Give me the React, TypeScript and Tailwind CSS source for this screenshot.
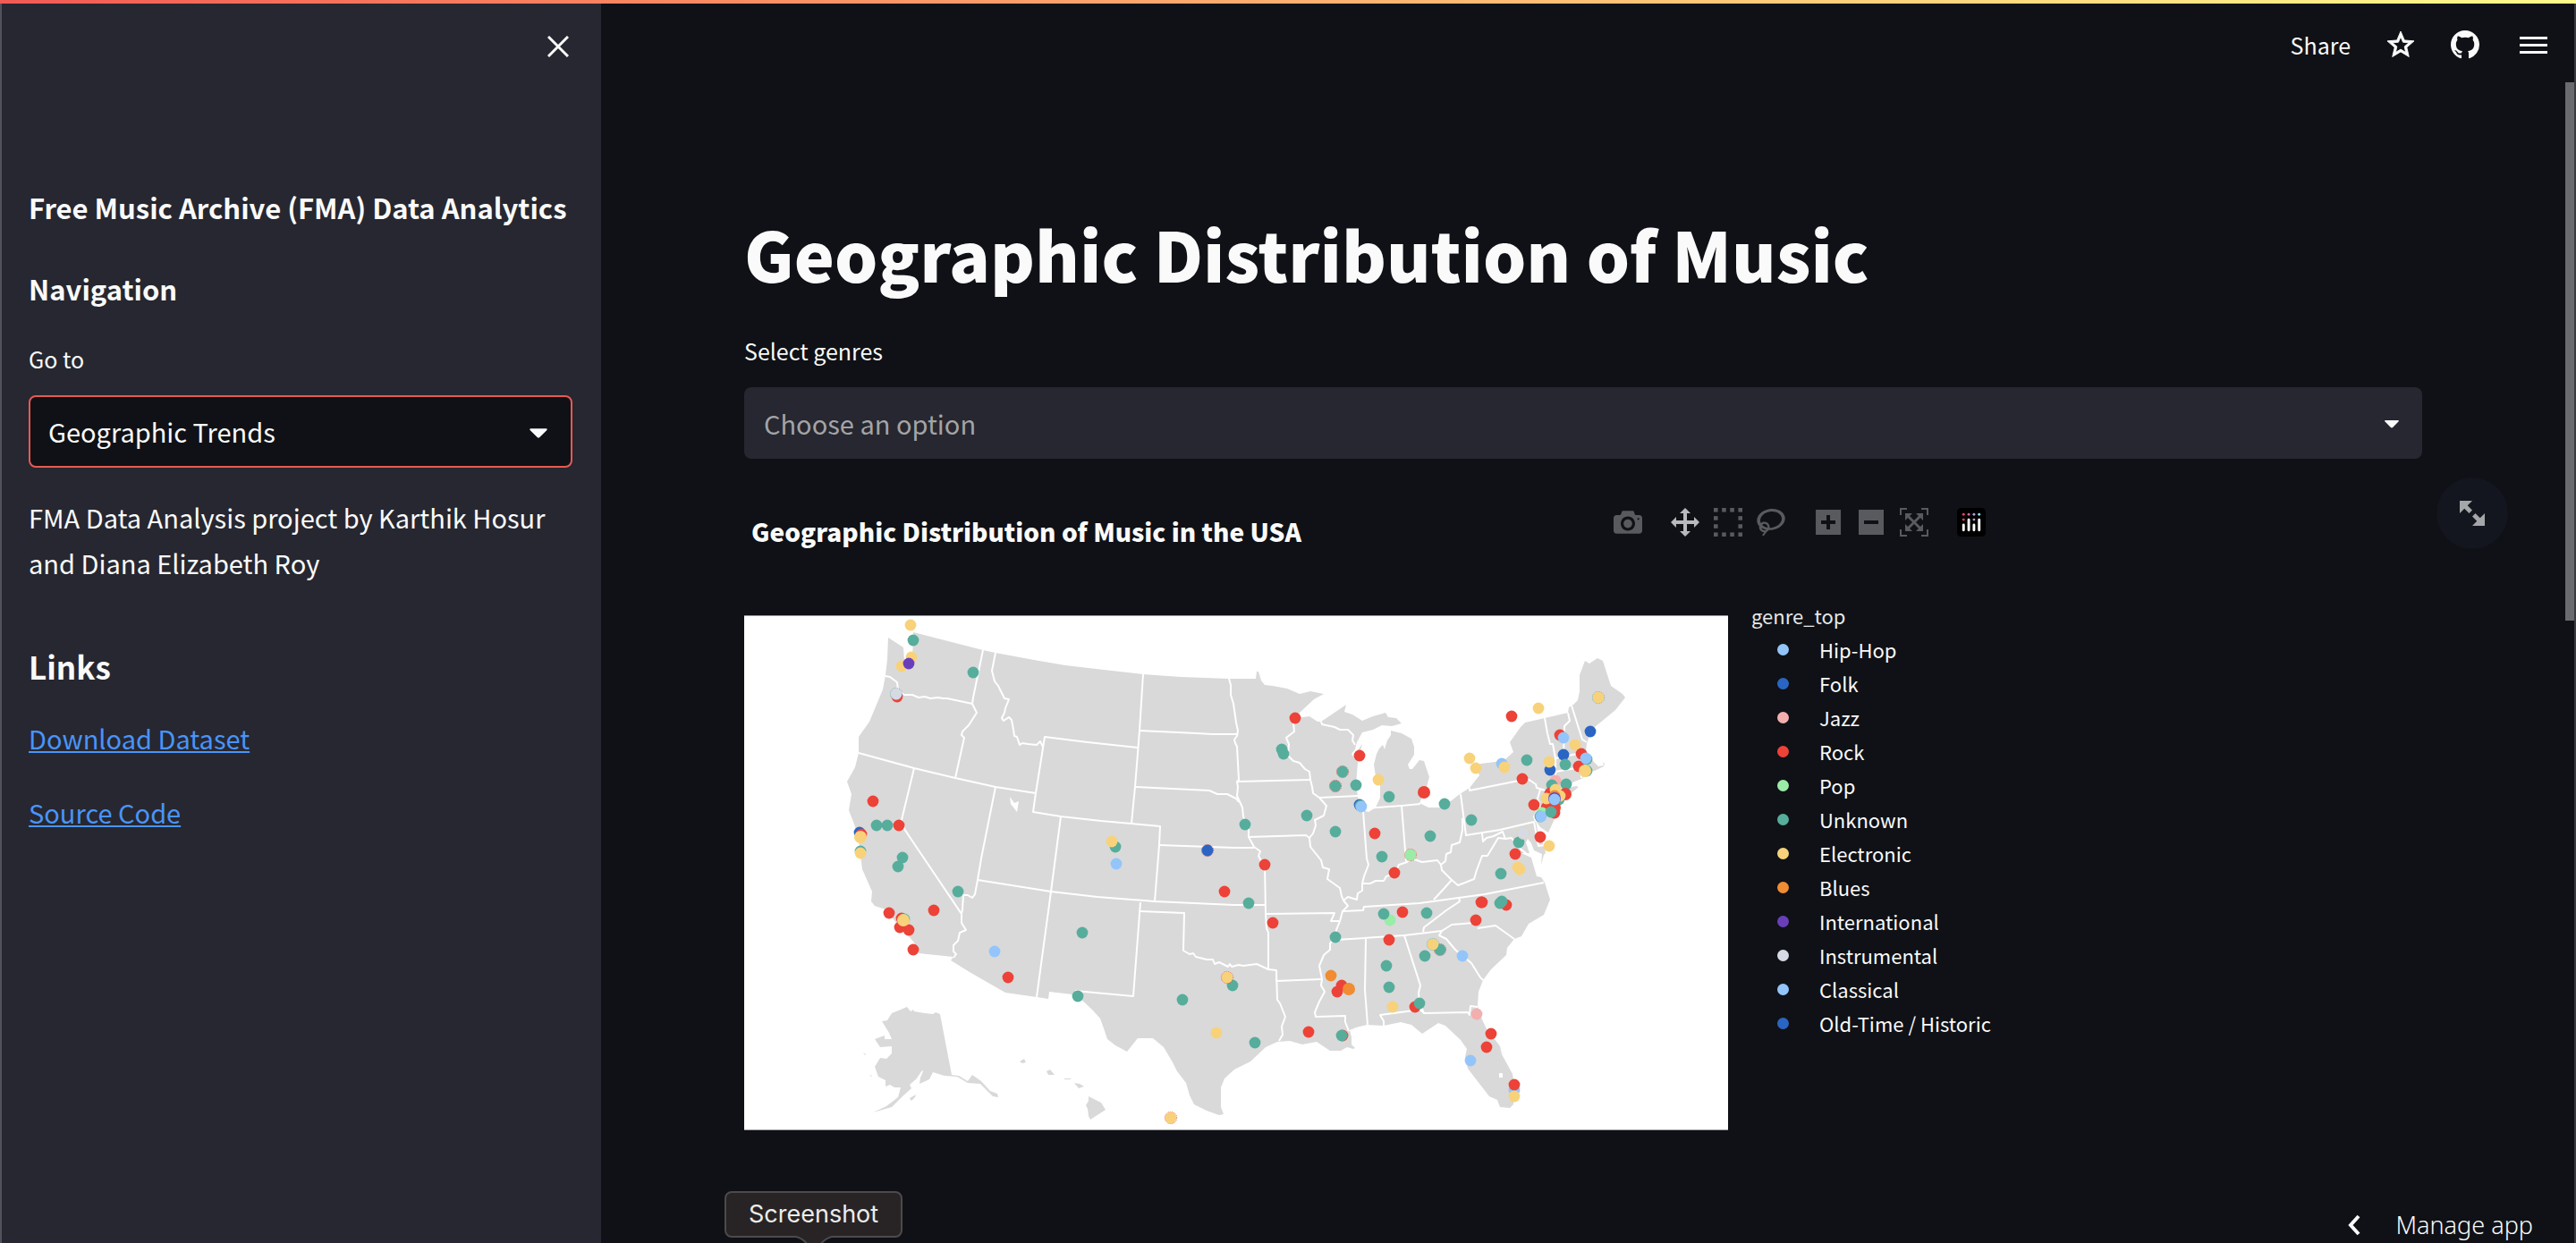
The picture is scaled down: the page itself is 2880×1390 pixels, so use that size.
import type { ReactNode } from "react";

const SANS = "font-['Noto_Sans_CJK_JP','Noto_Sans',sans-serif]";

const PALETTE = {
  sky: "#93c5fa",
  blue: "#2a65c3",
  pink: "#f3afae",
  red: "#ed4238",
  green: "#9aeca6",
  teal: "#57ad9c",
  yellow: "#f8d27a",
  orange: "#f08c33",
  purple: "#693fb9",
  silver: "#d5dae5",
};

type Tone = keyof typeof PALETTE;

const LEGEND: { name: string; tone: Tone }[] = [
  { name: "Hip-Hop", tone: "sky" },
  { name: "Folk", tone: "blue" },
  { name: "Jazz", tone: "pink" },
  { name: "Rock", tone: "red" },
  { name: "Pop", tone: "green" },
  { name: "Unknown", tone: "teal" },
  { name: "Electronic", tone: "yellow" },
  { name: "Blues", tone: "orange" },
  { name: "International", tone: "purple" },
  { name: "Instrumental", tone: "silver" },
  { name: "Classical", tone: "sky" },
  { name: "Old-Time / Historic", tone: "blue" },
];

const MAINLAND =
  "161,25 178,36 179,50 188,52 189,19 267,39 281,42 324,50 359,56 402,61 446,66 488,69 542,71 572,71 573,63 575,63 578,73 582,78 591,79 607,82 621,88 633,85 648,88 637,94 621,109 618,115 632,113 641,119 645,119 673,100 671,108 680,111 691,118 703,113 717,109 720,114 729,115 735,121 724,124 713,123 703,128 691,131 685,142 683,150 679,155 681,158 691,144 687,159 686,165 684,190 686,202 687,210 694,219 698,220 706,215 711,204 711,190 706,180 704,167 707,155 710,149 714,145 716,150 719,140 723,134 723,129 735,132 746,138 749,147 749,156 742,167 744,172 747,172 755,162 760,163 766,181 763,192 755,210 765,215 777,215 791,207 800,200 811,193 822,179 818,171 823,166 840,164 850,162 860,153 856,142 868,125 873,120 895,115 921,109 922,103 927,100 932,95 934,85 934,67 940,51 945,54 954,48 960,51 969,79 982,88 985,92 974,106 951,125 945,135 942,144 941,152 950,164 955,169 961,168 960,164 962,166 961,169 951,174 945,175 936,183 921,189 908,196 930,191 933,192 921,202 908,210 909,222 905,230 899,243 890,237 885,230 888,245 895,259 896,266 894,268 891,279 892,267 883,263 880,255 876,250 874,254 878,266 869,266 880,271 886,292 891,293 895,299 901,318 894,335 877,345 869,359 861,362 853,372 852,380 835,396 826,408 821,421 820,437 825,452 831,465 839,474 845,482 847,491 859,513 861,525 860,547 856,551 845,550 842,542 833,538 809,507 806,494 808,485 801,475 784,459 776,456 758,468 746,458 734,455 715,459 696,458 684,461 677,464 679,472 679,480 683,484 681,485 674,483 667,487 655,487 640,477 624,480 610,476 596,477 583,483 566,499 548,508 537,518 533,528 533,550 536,558 531,559 517,554 503,547 498,537 494,523 484,510 479,500 469,483 457,473 440,473 428,488 415,481 406,474 402,462 398,451 390,442 372,425 367,424 341,421 340,429 327,427 292,422 252,399 231,386 234,382 195,378 190,366 184,359 170,344 158,329 146,325 142,320 143,309 132,284 129,259 127,245 122,231 117,218 120,200 115,186 124,170 128,154 128,136 140,119 145,107 155,83 158,67 160,49";

const ALASKA =
  "182,438 186,443 189,441 190,443 202,445 211,446 214,444 219,446 232,514 240,515 250,521 255,514 265,521 275,532 283,535 284,539 278,538 264,524 250,523 238,516 224,515 211,511 207,519 196,524 197,517 200,510 199,509 192,519 185,525 187,529 177,538 165,550 144,556 159,549 172,539 175,528 168,528 163,525 158,527 158,520 150,516 146,505 152,495 159,496 165,490 165,482 152,483 146,474 157,470 157,474 165,474 162,467 154,454 160,453 165,445 175,441";

const ISLANDS = [
  "185,540 192,536 191,539 187,543",
  "133,489 136,491 135,492",
  "140,514 143,515 142,516",
  "308,499 313,496 315,500 311,501",
  "338,510 342,508 347,514 340,514",
  "358,518 365,518 365,519 358,519",
  "369,523 375,524 380,527 374,529",
  "385,538 399,545 404,553 387,564 385,560 384,552 382,548 385,543",
];

const LAKES = ["297,203 302,210 307,208 305,220 298,211", "844,512 848,512 848,517 844,517"];

const BORDERS = [
  "158,68 163,69 171,75 172,84 179,89 188,89 195,92 202,91 208,93 217,92 222,93 227,93 255,99",
  "267,39 256,92 255,99 260,109 251,123 244,130 243,134 246,137 236,182",
  "128,154 190,171 236,182 281,192 326,199",
  "190,171 176,229 179,239 243,334",
  "281,192 265,272 261,296 258,312 255,316 250,313 245,313 244,329 243,334 243,344 248,352 241,355 239,364 234,369 234,376 237,379 234,383",
  "261,296 343,309 395,315 459,320 548,324 583,324",
  "281,42 277,62 280,74 284,79 291,93 296,94 292,104 291,109 288,115 290,118 296,114 299,117 301,128 302,135 305,136 308,145 311,143 317,144 327,145 331,141 334,147",
  "440,148 384,142 336,136 326,199 323,220 354,225 399,230 433,233 465,236 464,257 459,320",
  "446,66 442,129 437,192 433,233",
  "442,129 506,132 524,133 551,133",
  "437,192 520,196 529,200 540,200 550,205 553,209",
  "464,257 548,260 570,260",
  "354,225 343,309 327,427",
  "443,321 435,426 370,420",
  "443,331 492,333 491,375 498,379 502,378 505,382 517,385 524,385 526,390 531,388 541,393 543,390 545,393 553,391 558,392 573,390 586,396 595,397 596,430 599,434 605,449 601,460 602,469 598,476",
  "542,71 544,78 544,89 547,99 550,120 552,129 551,135 548,139 549,143 551,147 553,184 551,186 552,192 551,202 557,215 558,225 564,240 564,248 570,259 577,264 575,269 578,275 582,279 583,334 584,350 586,355 586,396",
  "551,186 633,184",
  "614,120 615,130 606,137 609,144 608,157 614,163 621,165 627,172 632,175 633,184 635,192 636,199 643,204 651,213 648,224 638,229 639,235 636,244 632,249 633,259 645,274 647,282 654,284 652,295 666,305 668,314 670,319 675,325 669,331 666,342 662,352 661,360 655,367 655,374 648,380 643,392 646,407 645,414 649,421 643,432 638,444 639,449 672,448 672,455 676,465",
  "564,248 628,246 632,249",
  "643,204 686,202",
  "645,119 646,122 660,125 666,128 675,128 681,134 680,140 683,145",
  "692,219 696,272 698,279 693,292 691,300",
  "694,216 735,213 756,211",
  "735,213 740,275",
  "670,319 675,315 685,318 686,311 691,308 691,300 700,300 706,297 715,297 718,292 727,289 732,279 741,276 746,272 758,276 775,274 779,279 784,275 785,267 790,265 791,257 800,254 803,240 803,227",
  "801,200 807,246 845,240 883,231",
  "811,193 811,196 876,183 885,189 886,193 893,195 890,195 887,205 890,214 883,225 885,231",
  "893,195 905,200",
  "883,231 888,258 895,257",
  "779,279 780,285 791,296 783,305 771,318",
  "791,296 798,302 806,299 816,295 819,285 825,269 831,269 843,249 851,250 848,242 838,247 830,249 826,253 825,244",
  "851,250 858,249 865,259 875,267",
  "669,331 692,330 693,326 755,322 828,312 894,299",
  "583,334 660,333 656,342 665,342",
  "662,363 738,358 780,353 791,346 816,344",
  "820,350 840,347 861,362",
  "595,397 595,409 645,407",
  "695,362 694,419 697,458",
  "738,358 756,414 754,422 755,434 760,445",
  "715,459 715,454 711,447 756,441 760,445 809,444 811,447 812,437 820,438",
  "759,354 760,349 768,343 785,330 800,320 799,315",
  "780,353 777,358 785,362 795,374 813,389 823,405 826,408",
  "895,115 898,132 901,144 904,144 907,160 907,175 908,189",
  "921,109 923,118 917,124 916,159",
  "925,101 937,139 942,142",
  "907,160 931,155 938,152",
  "907,175 935,170 936,182",
];

const POINTS: [Tone, number, number, number?][] = [
  ["yellow", 186, 11], ["teal", 189, 28], ["yellow", 187, 47], ["yellow", 176, 57], ["purple", 184, 54],
  ["teal", 256, 64], ["red", 171, 91], ["silver", 170, 88], ["red", 144, 208], ["teal", 148, 235],
  ["teal", 160, 235], ["red", 173, 235], ["blue", 129, 243], ["red", 131, 245], ["yellow", 130, 248, 7],
  ["teal", 130, 264], ["yellow", 130, 266], ["teal", 177, 271], ["teal", 172, 281], ["teal", 415, 259],
  ["yellow", 411, 253], ["sky", 416, 278], ["blue", 518, 263], ["teal", 239, 309], ["red", 162, 333],
  ["red", 176, 339], ["red", 174, 349], ["red", 184, 352], ["teal", 179, 340], ["yellow", 178, 341, 7], ["red", 212, 330],
  ["red", 189, 374], ["sky", 280, 376], ["red", 295, 405], ["teal", 378, 355], ["teal", 373, 426],
  ["teal", 490, 430], ["yellow", 528, 467], ["yellow", 477, 562], ["red", 537, 309], ["red", 616, 115],
  ["teal", 601, 150], ["teal", 603, 155], ["red", 688, 157], ["teal", 669, 175], ["teal", 661, 191],
  ["teal", 684, 190], ["blue", 688, 212], ["teal", 689, 213], ["sky", 690, 214], ["yellow", 709, 184], ["teal", 721, 203],
  ["red", 760, 198, 7], ["teal", 783, 211], ["teal", 629, 224], ["teal", 560, 234], ["teal", 661, 242],
  ["red", 705, 244], ["teal", 713, 270], ["teal", 767, 247], ["green", 745, 268], ["red", 727, 288],
  ["red", 582, 279], ["teal", 813, 229], ["yellow", 811, 160], ["yellow", 818, 171], ["teal", 564, 322],
  ["red", 591, 344], ["teal", 661, 360], ["green", 722, 341], ["teal", 715, 334], ["red", 736, 332],
  ["teal", 763, 333], ["red", 721, 363], ["teal", 718, 392], ["teal", 721, 416], ["yellow", 725, 438],
  ["red", 750, 438], ["teal", 755, 434], ["teal", 761, 381], ["teal", 778, 374], ["yellow", 770, 368],
  ["sky", 803, 381], ["orange", 656, 403], ["red", 668, 414], ["red", 663, 421], ["orange", 676, 418, 7],
  ["teal", 546, 414], ["yellow", 540, 405], ["red", 631, 466], ["red", 669, 470], ["teal", 668, 470],
  ["teal", 571, 478], ["pink", 819, 446], ["sky", 812, 498], ["red", 824, 321], ["red", 818, 341],
  ["red", 858, 113], ["yellow", 888, 104], ["yellow", 955, 92], ["blue", 946, 130], ["red", 912, 134],
  ["sky", 916, 137], ["yellow", 929, 145], ["red", 936, 155], ["blue", 916, 156], ["teal", 918, 167],
  ["red", 933, 169], ["teal", 942, 161], ["sky", 941, 160], ["teal", 942, 174], ["yellow", 940, 174, 7],
  ["sky", 847, 166], ["yellow", 850, 170], ["teal", 875, 162], ["blue", 901, 173], ["yellow", 900, 164],
  ["red", 870, 183], ["pink", 907, 185], ["teal", 903, 190], ["teal", 919, 189], ["red", 901, 199],
  ["red", 918, 200, 7], ["yellow", 907, 195], ["teal", 911, 206], ["yellow", 912, 202], ["red", 897, 215],
  ["red", 906, 215, 7], ["red", 906, 221], ["yellow", 897, 205], ["orange", 906, 202], ["purple", 906, 205, 7],
  ["sky", 906, 206], ["green", 892, 221], ["teal", 890, 225], ["sky", 891, 225], ["teal", 902, 220],
  ["red", 883, 212], ["red", 890, 248], ["yellow", 900, 258], ["teal", 866, 254], ["silver", 871, 244],
  ["red", 862, 267], ["yellow", 865, 282], ["yellow", 867, 284], ["teal", 846, 289], ["red", 825, 321],
  ["red", 852, 324], ["teal", 847, 320], ["teal", 845, 322], ["red", 835, 468], ["red", 830, 483],
  ["sky", 861, 531], ["red", 861, 525], ["yellow", 861, 538],
];

// Markers under which a differently coloured ring shows.
const RINGS: [Tone, number, number][] = [
  ["red", 669, 175], ["red", 661, 191], ["red", 778, 374], ["teal", 955, 92], ["red", 540, 405],
  ["teal", 170, 88], ["yellow", 871, 244], ["red", 745, 268], ["teal", 770, 368], ["red", 477, 562], ["red", 518, 263],
];

function UsaMap() {
  return (
    <svg viewBox="0 0 1100 576" className="block w-full" role="img" aria-label="Map of music locations in the USA">
      <rect width="1100" height="576" fill="#fff" />
      <g fill="#d9d9d9">
        <polygon points={MAINLAND} />
        <polygon points={ALASKA} />
        {ISLANDS.map((p) => (
          <polygon key={p} points={p} />
        ))}
      </g>
      {LAKES.map((p) => (
        <polygon key={p} points={p} fill="#fff" />
      ))}
      <g fill="none" stroke="#fff" strokeWidth="2" strokeLinejoin="round">
        {BORDERS.map((p) => (
          <polyline key={p} points={p} />
        ))}
      </g>
      {POINTS.map(([tone, x, y, r], i) => {
        const ring = RINGS.find(([, rx, ry]) => rx === x && ry === y);
        return (
          <g key={i}>
            {ring && <circle cx={x} cy={y} r={6.6} fill="none" stroke={PALETTE[ring[0]]} strokeDasharray="1 1" />}
            <circle cx={x} cy={y} r={r ?? 6.4} fill={PALETTE[tone]} />
          </g>
        );
      })}
      <path d="M0 .5H1100M0 575.5H1100" stroke="#9b9da1" />
    </svg>
  );
}

function Caret({ size }: { size: string }) {
  return (
    <svg viewBox="0 0 24 24" className={`pointer-events-none shrink-0 fill-[#fafafa] ${size}`} aria-hidden="true">
      <path d="M12.7071 15.2929L17.1464 10.8536C17.4614 10.5386 17.2383 10 16.7929 10L7.20711 10C6.76165 10 6.53857 10.5386 6.85355 10.8536L11.2929 15.2929C11.6834 15.6834 12.3166 15.6834 12.7071 15.2929Z" />
    </svg>
  );
}

function ModeButton({ label, active, children, width = 1000 }: { label: string; active?: boolean; children: ReactNode; width?: number }) {
  return (
    <button type="button" aria-label={label} className="flex w-12 justify-center">
      <svg
        viewBox={`0 0 ${width} 1000`}
        className={active ? "h-8 w-8 fill-[#b9babb]" : "h-8 w-8 fill-[#595a5e]"}
        aria-hidden="true"
      >
        <g transform="matrix(1 0 0 -1 0 850)">{children}</g>
      </svg>
    </button>
  );
}

function ModeBar() {
  const squares: [number, number][] = [];
  [0, 286, 571, 857].forEach((x, i) =>
    [707, 421, 136, -150].forEach((y, j) => {
      if (i === 0 || i === 3 || j === 0 || j === 3) squares.push([x, y]);
    }),
  );
  return (
    <div className="flex h-16 items-center gap-4" role="toolbar" aria-label="Chart tools">
      <ModeButton label="Download plot as a png">
        <path d="m500 450c-83 0-150-67-150-150 0-83 67-150 150-150 83 0 150 67 150 150 0 83-67 150-150 150z m400 150h-120c-16 0-34 13-39 29l-31 93c-6 15-23 28-40 28h-340c-16 0-34-13-39-28l-31-94c-6-15-23-28-40-28h-120c-55 0-100-45-100-100v-450c0-55 45-100 100-100h800c55 0 100 45 100 100v450c0 55-45 100-100 100z m-400-550c-138 0-250 112-250 250 0 138 112 250 250 250 138 0 250-112 250-250 0-138-112-250-250-250z m365 380c-19 0-35 16-35 35 0 19 16 35 35 35 19 0 35-16 35-35 0-19-16-35-35-35z" />
      </ModeButton>
      <div className="flex">
        <ModeButton label="Pan" active>
          <path d="m1000 350l-187 188 0-125-250 0 0 250 125 0-188 187-187-187 125 0 0-250-250 0 0 125-188-188 186-187 0 125 252 0 0-250-125 0 187-188 188 188-125 0 0 250 250 0 0-126 187 188z" />
        </ModeButton>
        <ModeButton label="Box Select">
          {squares.map(([x, y]) => (
            <rect key={`${x}-${y}`} x={x} y={y} width="143" height="143" />
          ))}
        </ModeButton>
        <ModeButton label="Lasso Select" width={1031}>
          <path d="m1018 538c-36 207-290 336-568 286-277-48-473-256-436-463 10-57 36-108 76-151-13-66 11-137 68-183 34-28 75-41 114-42l-55-70 0 0c-2-1-3-2-4-3-10-14-8-34 5-45 14-11 34-8 45 4 1 1 2 3 2 5l0 0 113 140c16 11 31 24 45 40 4 3 6 7 8 11 48-3 100 0 151 9 278 48 473 255 436 462z m-624-379c-80 14-149 48-197 96 42 42 109 47 156 9 33-26 47-66 41-105z m-187-74c-19 16-33 37-39 60 50-32 109-55 174-68-42-25-95-24-135 8z m360 75c-34-7-69-9-102-8 8 62-16 128-68 170-73 59-175 54-244-5-9 20-16 40-20 61-28 159 121 317 333 354s407-60 434-217c28-159-121-318-333-355z" />
        </ModeButton>
      </div>
      <div className="flex">
        <ModeButton label="Zoom in" width={875}>
          <path d="m1 787l0-875 875 0 0 875-875 0z m687-500l-187 0 0-187-125 0 0 187-188 0 0 125 188 0 0 187 125 0 0-187 187 0 0-125z" />
        </ModeButton>
        <ModeButton label="Zoom out" width={875}>
          <path d="m0 788l0-876 875 0 0 876-875 0z m688-500l-500 0 0 125 500 0 0-125z" />
        </ModeButton>
        <ModeButton label="Reset">
          <path d="m250 850l-187 0-63 0 0-62 0-188 63 0 0 188 187 0 0 62z m688 0l-188 0 0-62 188 0 0-188 62 0 0 188 0 62-62 0z m-875-938l0 188-63 0 0-188 0-62 63 0 187 0 0 62-187 0z m875 188l0-188-188 0 0-62 188 0 62 0 0 62 0 188-62 0z m-125 188l-1 0-93-94-156 156 156 156 92-93 2 0 0 250-250 0 0-2 93-92-156-156-156 156 94 92 0 2-250 0 0-250 0 0 93 93 157-156-157-156-93 94 0 0 0-250 250 0 0 0-94 93 156 157 156-157-93-93 0 0 250 0 0 250z" />
        </ModeButton>
      </div>
      <a href="#plotly" aria-label="Produced with Plotly" className="flex w-12 justify-center">
        <svg viewBox="0 0 132 132" className="size-8" aria-hidden="true">
          <rect width="132" height="132" rx="18" fill="#000" />
          <g fill="#ef3f6b">
            <circle cx="30" cy="30" r="6" />
            <circle cx="30" cy="54" r="6" />
          </g>
          <circle cx="54" cy="30" r="6" fill="#d0679b" />
          <circle cx="78" cy="30" r="6" fill="#b7a0cf" />
          <circle cx="78" cy="54" r="6" fill="#b7a0cf" />
          <circle cx="102" cy="30" r="6" fill="#8fe0f5" />
          <path d="M30 78v24M54 54v48M78 78v24M102 54v48" stroke="#fff" strokeWidth="12" strokeLinecap="round" />
        </svg>
      </a>
    </div>
  );
}

function Sidebar() {
  return (
    <aside className="relative w-[672px] shrink-0 border-l-2 border-[#515259] bg-[#262730] pr-8 pl-[30px] text-[#fafafa]">
      <div className="flex h-24 justify-end pr-1">
        <button type="button" aria-label="Close sidebar" className="flex w-6 items-center justify-center">
          <svg viewBox="0 0 24 24" className="size-6" aria-hidden="true">
            <path d="M1 1L23 23M23 1L1 23" stroke="#fafafa" strokeWidth="3" />
          </svg>
        </button>
      </div>
      <h2 className="mt-[108px] text-[31px] leading-[48px] font-bold whitespace-nowrap">Free Music Archive (FMA) Data Analytics</h2>
      <h2 className="mt-[43px] text-[31px] leading-[48px] font-bold">Navigation</h2>
      <label htmlFor="page" className="mt-[34px] block text-[25px] leading-10">
        Go to
      </label>
      <div className="mt-[21px] flex h-[81px] items-center rounded-lg border-2 border-[#e85a50] bg-[#0f1116]">
        <select
          id="page"
          className="h-full flex-1 appearance-none bg-transparent pl-5 text-[29px] outline-none"
          defaultValue="Geographic Trends"
        >
          <option>Geographic Trends</option>
        </select>
        <div className="pointer-events-none -ml-16 flex w-[58px] justify-start">
          <Caret size="size-11" />
        </div>
      </div>
      <p className="mt-[30px] text-[29px] leading-[51px]">FMA Data Analysis project by Karthik Hosur and Diana Elizabeth Roy</p>
      <h2 className="mt-[63px] text-[35px] leading-[54px] font-bold">Links</h2>
      <p className="mt-7 text-[29px] leading-[51px]">
        <a href="#dataset" className="text-[#4a94f8] underline">
          Download Dataset
        </a>
      </p>
      <p className="mt-8 text-[29px] leading-[51px]">
        <a href="#source" className="text-[#4a94f8] underline">
          Source Code
        </a>
      </p>
    </aside>
  );
}

export default function App() {
  return (
    <div className={`relative flex h-screen flex-col overflow-hidden bg-[#0f1116] text-[#fafafa] ${SANS}`}>
      <div className="h-1 shrink-0 bg-linear-to-r from-[#f25a54] to-[#fdfa8b]" />
      <div className="flex min-h-0 flex-1">
        <Sidebar />
        <div className="flex min-w-0 flex-1 flex-col">
          <header className="flex h-[92px] shrink-0 items-center justify-end pr-8">
            <button type="button" className="text-[25px] leading-10">
              Share
            </button>
            <button type="button" aria-label="Favorite" className="ml-[38px]">
              <svg viewBox="0 0 24 24" className="size-9 fill-[#fafafa]" aria-hidden="true">
                <path d="M22 9.24l-7.19-.62L12 2 9.19 8.63 2 9.24l5.46 4.73L5.82 21 12 17.27 18.18 21l-1.63-7.03L22 9.24zM12 15.4l-3.76 2.27 1-4.28-3.32-2.88 4.38-.38L12 6.1l1.71 4.04 4.38.38-3.32 2.88 1 4.28L12 15.4z" stroke="#fafafa" strokeWidth=".6" strokeLinejoin="round" />
              </svg>
            </button>
            <a href="#github" aria-label="View source on GitHub" className="ml-[38px]">
              <svg viewBox="0 0 16 16" className="size-8 fill-[#fafafa]" aria-hidden="true">
                <path d="M8 0C3.58 0 0 3.58 0 8c0 3.54 2.29 6.53 5.47 7.59.4.07.55-.17.55-.38 0-.19-.01-.82-.01-1.49-2.01.37-2.53-.49-2.69-.94-.09-.23-.48-.94-.82-1.13-.28-.15-.68-.52-.01-.53.63-.01 1.08.58 1.23.82.72 1.21 1.87.87 2.33.66.07-.52.28-.87.51-1.07-1.78-.2-3.64-.89-3.64-3.95 0-.87.31-1.59.82-2.15-.08-.2-.36-1.02.08-2.12 0 0 .67-.21 2.2.82.64-.18 1.32-.27 2-.27.68 0 1.36.09 2 .27 1.53-1.04 2.2-.82 2.2-.82.44 1.1.16 1.92.08 2.12.51.56.82 1.27.82 2.15 0 3.07-1.87 3.75-3.65 3.95.29.25.54.73.54 1.48 0 1.07-.01 1.93-.01 2.2 0 .21.15.46.55.38A8.013 8.013 0 0016 8c0-4.42-3.58-8-8-8z" />
              </svg>
            </a>
            <button type="button" aria-label="Main menu" className="ml-[45px] flex w-[31px] flex-col gap-[5px]">
              <span className="h-[3px] w-full bg-[#fafafa]" />
              <span className="h-[3px] w-full bg-[#fafafa]" />
              <span className="h-[3px] w-full bg-[#fafafa]" />
            </button>
          </header>

          <main className="pr-[172px] pl-40">
            <h1 className="mt-[134px] text-[76px] leading-[106px] font-black">Geographic Distribution of Music</h1>
            <label htmlFor="genres" className="mt-[36px] block text-[25px] leading-10">
              Select genres
            </label>
            <div className="mt-[21px] flex h-20 items-center rounded-lg bg-[#262730] pr-4">
              <input
                id="genres"
                placeholder="Choose an option"
                className="h-full min-w-0 flex-1 bg-transparent pl-[22px] text-[29px] outline-none placeholder:text-[#a3a4a8]"
              />
              <Caret size="size-9" />
            </div>

            <section className="relative mt-[33px]" aria-label="Geographic Distribution of Music in the USA">
              <div className="flex h-[142px] w-[1396px] justify-between">
                <h3 className="mt-6 pl-2 text-[28px] leading-[48px] font-black">Geographic Distribution of Music in the USA</h3>
                <div className="mt-[6px]">
                  <ModeBar />
                </div>
              </div>
              <div className="flex items-start">
                <div className="w-[1100px] shrink-0">
                  <UsaMap />
                </div>
                <div className="pl-[26px]">
                  <p className="-mt-[19px] h-[38px] text-[22px] leading-[38px] text-[#e6e7e8]">genre_top</p>
                  <ul>
                    {LEGEND.map((g) => (
                      <li key={g.name} className="flex h-[38px] items-center pl-[29px] text-[22px] leading-[38px]">
                        <svg viewBox="0 0 12 12" className="mr-[34px] size-[13px]" aria-hidden="true">
                          <circle cx="6" cy="6" r="6" fill={PALETTE[g.tone]} />
                        </svg>
                        {g.name}
                      </li>
                    ))}
                  </ul>
                </div>
              </div>
              <button
                type="button"
                aria-label="View fullscreen"
                className="absolute -top-3 -right-24 flex size-20 items-center justify-center rounded-full bg-[#13161e]"
              >
                <svg viewBox="0 0 8 8" className="size-7 fill-[#a5a6a9]" aria-hidden="true">
                  <path d="M0 0v4l1.5-1.5 1.5 1.5 1-1-1.5-1.5 1.5-1.5h-4zm5 4l-1 1 1.5 1.5-1.5 1.5h4v-4l-1.5 1.5-1.5-1.5z" />
                </svg>
              </button>
            </section>
          </main>
        </div>
      </div>

      <div className="absolute top-[92px] right-0 h-[602px] w-3 bg-[#6a6b6f]" aria-hidden="true" />
      <div className="absolute top-1 right-0 h-full w-0.5 bg-[#3a3b40]" aria-hidden="true" />

      <div
        role="tooltip"
        className="absolute bottom-[6px] left-[810px] rounded-lg border-2 border-[#4c4a4b] bg-[#282425] px-[25px] py-1 font-['Inter',sans-serif] text-[27px] leading-[40px] text-[#ececec]"
      >
        Screenshot
        <svg viewBox="0 0 40 10" className="absolute -bottom-[10px] left-1/2 h-[10px] w-10 -translate-x-1/2" aria-hidden="true">
          <path d="M0 0Q8 3 13 10H27Q32 3 40 0Z" fill="#282425" />
          <path d="M0 1Q8 3 13 10M27 10Q32 3 40 1" fill="none" stroke="#4c4a4b" strokeWidth="2" />
        </svg>
      </div>

      <button
        type="button"
        className="absolute right-12 bottom-0 flex h-10 items-center gap-10 font-['Noto_Sans',sans-serif] text-[27px] leading-10 font-light"
      >
        <svg viewBox="0 0 14 24" className="h-6 w-[14px]" aria-hidden="true">
          <path d="M12 2L3 12L12 22" fill="none" stroke="#fafafa" strokeWidth="4" />
        </svg>
        Manage app
      </button>
    </div>
  );
}
